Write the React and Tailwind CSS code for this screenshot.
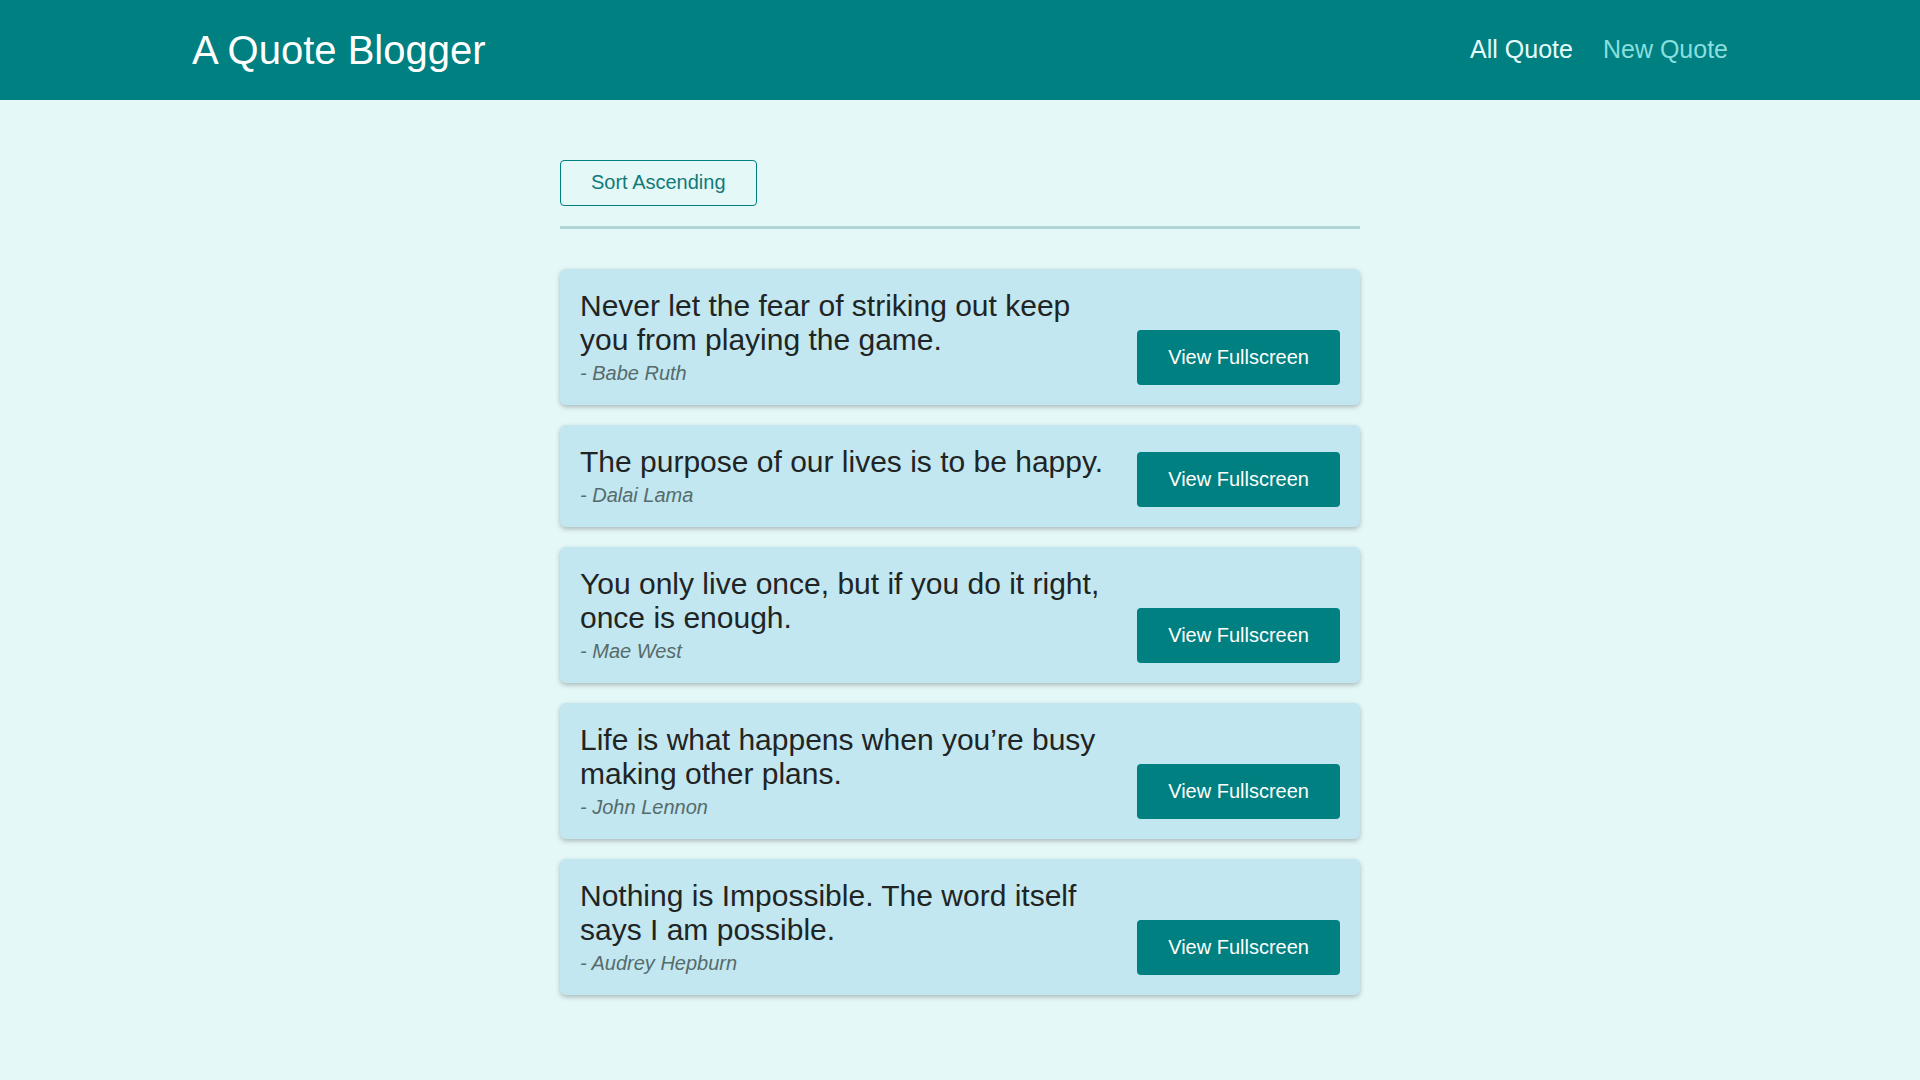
const quotes = [
  { text: "Never let the fear of striking out keep you from playing the game.", author: "Babe Ruth" },
  { text: "The purpose of our lives is to be happy.", author: "Dalai Lama" },
  { text: "You only live once, but if you do it right, once is enough.", author: "Mae West" },
  { text: "Life is what happens when you’re busy making other plans.", author: "John Lennon" },
  { text: "Nothing is Impossible. The word itself says I am possible.", author: "Audrey Hepburn" },
];

function Header() {
  return (
    <header className="flex h-[100px] items-center justify-between bg-[#008080] px-[10%]">
      <div className="text-[40px] text-white">A Quote Blogger</div>
      <nav>
        <ul className="flex text-[25px]">
          <li><a href="#quotes" className="text-[#e6fcfc]">All Quote</a></li>
          <li className="ml-[30px]"><a href="#new-quote" className="text-[#88dfdf]">New Quote</a></li>
        </ul>
      </nav>
    </header>
  );
}

function QuoteItem({ text, author }) {
  return (
    <li className="mb-5 flex items-end justify-between rounded-md bg-[#c2e7f0] p-5 shadow-[0_2px_5px_rgba(0,0,0,0.26)]">
      <figure className="flex-1 pr-5">
        <blockquote className="text-[30px] leading-[34px] text-[#1f2424]">{text}</blockquote>
        <figcaption className="mt-[5px] text-xl leading-[23px] text-[#566b6b] italic">- {author}</figcaption>
      </figure>
      <a href="#fullscreen" className="shrink-0 rounded bg-[#008080] px-[31px] py-4 text-xl leading-[23px] text-white">
        View Fullscreen
      </a>
    </li>
  );
}

export default function App() {
  return (
    <div className="min-h-screen bg-[#e5f8f8] font-['Liberation_Sans',Arial,sans-serif]">
      <Header />
      <main className="mx-auto w-full max-w-[800px] pt-[60px] pb-16">
        <div className="mb-10 border-b-3 border-[#b0d4d4] pb-5">
          <button type="button" className="block rounded border border-[#008080] px-[30px] pt-[10px] pb-[11px] text-xl leading-[23px] text-[#117a7a]">
            Sort Ascending
          </button>
        </div>
        <ul>
          {quotes.map((q) => <QuoteItem key={q.author} {...q} />)}
        </ul>
      </main>
    </div>
  );
}
